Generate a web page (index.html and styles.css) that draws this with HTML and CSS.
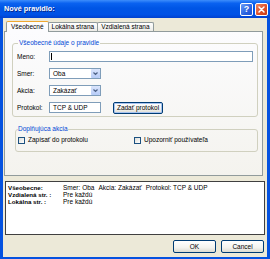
FILE: index.html
```html
<!doctype html>
<html lang="sk">
<head>
    <meta charset="utf-8">
    <title>Nové pravidlo</title>
    <link rel="stylesheet" href="styles.css">
</head>
<body>

    <div class="Window">

        <!-- title bar -->
        <div class="TitleBar">
            <span class="Title">Nové pravidlo:</span>
            <div class="TitleButtons">
                <span class="TitleBtn Help">?</span>
                <span class="TitleBtn Close">
                    <svg viewBox="0 0 9 9" width="9" height="9"><path d="M2 2L7 7M7 2L2 7" stroke="#fff" stroke-width="1.5" stroke-linecap="round"/></svg>
                </span>
            </div>
        </div>

        <div class="Frame">

            <!-- tabs -->
            <div class="Tabs">
                <div class="Tab Active">Všeobecné</div>
                <div class="Tab">Lokálna strana</div>
                <div class="Tab">Vzdialená strana</div>
            </div>

            <div class="Panel">

                <fieldset class="Group">
                    <legend>Všeobecné údaje o pravidle</legend>
                    <div class="Row">
                        <span class="Label">Meno:</span>
                        <div class="Field Wide"><span class="Caret"></span></div>
                    </div>
                    <div class="Row">
                        <span class="Label">Smer:</span>
                        <div class="Field Select">Oba
                            <span class="Drop"><svg viewBox="0 0 7 7" width="7" height="7"><path d="M1.5 2.5L3.5 4.5L5.5 2.5" fill="none" stroke="#4d6185" stroke-width="1.2"/></svg></span>
                        </div>
                    </div>
                    <div class="Row">
                        <span class="Label">Akcia:</span>
                        <div class="Field Select">Zakázať
                            <span class="Drop"><svg viewBox="0 0 7 7" width="7" height="7"><path d="M1.5 2.5L3.5 4.5L5.5 2.5" fill="none" stroke="#4d6185" stroke-width="1.2"/></svg></span>
                        </div>
                    </div>
                    <div class="Row">
                        <span class="Label">Protokol:</span>
                        <div class="Field Short">TCP &amp; UDP</div>
                        <button class="Btn Protocol">Zadať protokol</button>
                    </div>
                </fieldset>

                <fieldset class="Group Extra">
                    <legend>Doplňujúca akcia</legend>
                    <div class="Checks">
                        <label class="Check"><span class="Box"></span>Zapísať do protokolu</label>
                        <label class="Check"><span class="Box"></span>Upozorniť používateľa</label>
                    </div>
                </fieldset>

            </div>

            <!-- summary -->
            <div class="Summary">
                <b>Všeobecne:</b>
                <span><span class="Item">Smer: Oba</span><span class="Item">Akcia: Zakázať</span><span class="Item">Protokol: TCP &amp; UDP</span></span>
                <b>Vzdialená str. :</b>
                <span>Pre každú</span>
                <b>Lokálna str. :</b>
                <span>Pre každú</span>
            </div>

            <div class="Actions">
                <button class="Btn">OK</button>
                <button class="Btn">Cancel</button>
            </div>

        </div>
    </div>

</body>
</html>
```

FILE: styles.css
```css
*, *:before, *:after {
    box-sizing: border-box;
    margin: 0;
    padding: 0;
}

* {
    font-family: "Liberation Sans", Arial, sans-serif;
}

html, body {
    width: 270px;
    height: 259px;
    overflow: hidden;
    background: #ece9d8;
}

.Window {
    display: flex;
    flex-direction: column;
    width: 270px;
    height: 259px;
    font-size: 6.5px;
    line-height: 8px;
    color: #000;
}

/* title bar */

.TitleBar {
    display: flex;
    align-items: center;
    height: 18px;
    padding: 0 2px 0 4px;
    background: linear-gradient(#3d8dfb 0%, #0a62f0 18%, #0055e5 45%, #0052e6 80%, #0141cf 100%);
}

.Title {
    flex: 1;
    color: #fff;
    font-size: 7.3px;
    font-weight: bold;
    text-shadow: 1px 1px #0a2a8a;
}

.TitleButtons {
    display: flex;
    gap: 2px;
}

.TitleBtn {
    display: flex;
    align-items: center;
    justify-content: center;
    width: 13px;
    height: 13px;
    border: 1px solid #fff;
    border-radius: 2px;
    color: #fff;
    font-size: 9px;
    font-weight: bold;
}

.Help {
    background: linear-gradient(135deg, #6a9cf8, #2a63e0 60%, #1d4fd0);
}

.Close {
    background: linear-gradient(135deg, #ec8a66, #e0502a 55%, #c83d18);
}

/* frame */

.Frame {
    flex: 1;
    display: flex;
    flex-direction: column;
    border: 3px solid #0552e0;
    border-top: none;
    border-bottom-width: 2px;
    background: #ece9d8;
}

.Tabs {
    display: flex;
    align-items: flex-end;
    height: 10px;
    margin: 3px 0 0 3px;
    position: relative;
    z-index: 1;
}

.Tab {
    height: 9px;
    padding: 0 3px;
    border: 1px solid #919b9c;
    border-bottom: none;
    border-radius: 2px 2px 0 0;
    background: linear-gradient(#fff, #ecebe6);
    line-height: 8px;
    white-space: nowrap;
}

.Tab + .Tab {
    margin-left: -1px;
}

.Tab.Active {
    height: 11px;
    margin-bottom: -1px;
    padding: 0 4px;
    border-top: 1px solid #f0a830;
    background: #fcfcfe;
    line-height: 9px;
}

.Panel {
    height: 145px;
    margin: 0 4px 0 1px;
    padding: 7px 4px 0 7px;
    border: 1px solid #919b9c;
    background: linear-gradient(#fcfcfe, #f4f3ee);
}

.Group {
    display: flex;
    flex-direction: column;
    gap: 6px;
    padding: 4px 4px 3px 4px;
    border: 1px solid #d0d0bf;
    border-radius: 3px;
}

.Group legend {
    margin-left: 1px;
    padding: 0 1px;
    color: #0046d5;
    line-height: 8px;
}

.Extra {
    margin: 8px 0 0 3px;
    padding: 3px 2px 7px 2px;
}

.Extra legend {
    margin-left: 0;
    padding: 0;
}

.Row {
    display: flex;
    align-items: center;
    height: 11px;
}

.Label {
    width: 32px;
    color: #000;
}

.Field {
    display: flex;
    align-items: center;
    height: 11px;
    padding-left: 3px;
    border: 1px solid #7f9db9;
    background: #fff;
}

.Wide {
    flex: 1;
    padding-left: 1px;
}

.Caret {
    width: 1px;
    height: 7px;
    background: #000;
}

.Select {
    width: 52px;
}

.Short {
    width: 52px;
}

.Drop {
    display: flex;
    align-items: center;
    justify-content: center;
    width: 9px;
    height: 9px;
    margin-left: auto;
    border-radius: 1px;
    background: linear-gradient(#dbe5fc, #b6cbf7);
}

.Btn {
    height: 13px;
    border: 1px solid #003c74;
    border-radius: 2px;
    background: linear-gradient(#fff 0%, #f3f3ef 60%, #dcdad0 100%);
    color: #000;
    font-size: 6.5px;
    line-height: 10px;
}

.Protocol {
    width: 50px;
    height: 12px;
    margin-left: 12px;
    box-shadow: inset 0 0 0 1px #a8c4f0;
}

.Checks {
    display: flex;
    align-items: center;
    height: 8px;
}

.Check {
    display: flex;
    align-items: center;
    gap: 3px;
    width: 116px;
}

.Box {
    width: 7px;
    height: 7px;
    border: 1px solid #1c5180;
    background: linear-gradient(135deg, #dcdcd7, #fff);
}

/* summary */

.Summary {
    display: grid;
    grid-template-columns: 55px 1fr;
    align-content: start;
    height: 54px;
    margin: 5px 2px 0 2px;
    padding: 2px 2px;
    border: 1px solid #404040;
    background: #fff;
    line-height: 7px;
    white-space: nowrap;
}

.Summary b {
    font-size: 6.2px;
}

.Item + .Item {
    margin-left: 4px;
}

.Actions {
    display: flex;
    justify-content: flex-end;
    gap: 5px;
    margin: 5px 3px 0 0;
}

.Actions .Btn {
    width: 43px;
}
```
